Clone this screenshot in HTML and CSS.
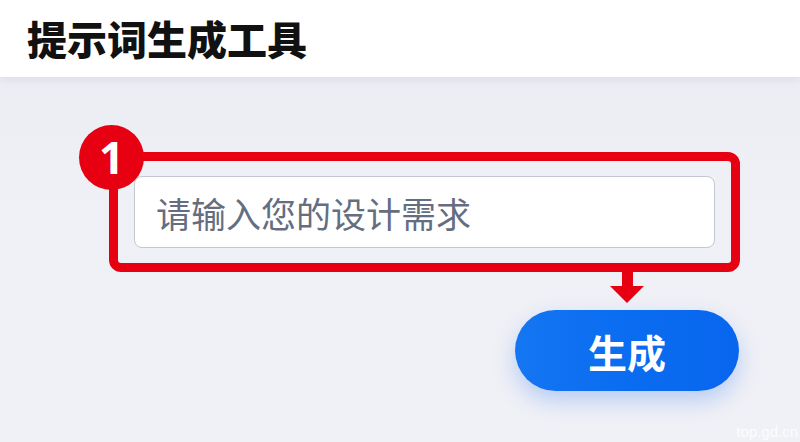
FILE: index.html
```html
<!DOCTYPE html>
<html lang="zh-CN">
<head>
    <meta charset="UTF-8">
    <meta name="viewport" content="width=device-width, initial-scale=1.0">
    <title>提示词生成工具</title>
    <link rel="stylesheet" href="styles.css">
</head>
<body>
    <header class="topbar">
        <h1>提示词生成工具</h1>
    </header>

    <main class="stage">
        <div class="frame">
            <span class="step">1</span>
            <input class="prompt-input" type="text" placeholder="请输入您的设计需求">
        </div>
        <div class="actions">
            <div class="arrow">
                <span class="arrow-stem"></span>
                <span class="arrow-head"></span>
            </div>
            <button class="generate-btn">生成</button>
        </div>
    </main>

    <div class="watermark">top.gd.cn</div>
</body>
</html>
```

FILE: styles.css
```css
body {
    margin: 0;
    height: 442px;
    overflow: hidden;
    font-family: "Noto Sans CJK SC", "Noto Sans", sans-serif;
    background: linear-gradient(180deg, #e9eaf1 0%, #eff0f5 40%, #f0f1f6 100%);
    position: relative;
}
.topbar {
    height: 77px;
    background: #fff;
    padding-left: 27px;
    box-shadow: 0 2px 8px rgba(30, 40, 80, 0.08);
    position: relative;
}
.topbar h1 {
    margin: 0;
    font-size: 40px;
    line-height: 77px;
    font-weight: 900;
    color: #111;
}
.stage {
    padding: 75px 0 0 109px;
    display: flex;
    flex-direction: column;
}
.frame {
    position: relative;
    box-sizing: border-box;
    width: 631px;
    height: 120px;
    border: 9px solid #e60012;
    border-radius: 12px;
    padding: 15px 15px 0 16px;
}
.step {
    position: absolute;
    left: -39px;
    top: -36px;
    width: 65px;
    height: 65px;
    border-radius: 50%;
    background: #e60012;
    color: #fff;
    font-family: "Noto Sans", "Liberation Sans", sans-serif;
    font-size: 44px;
    font-weight: 700;
    line-height: 64px;
    text-align: center;
}
.prompt-input {
    box-sizing: border-box;
    width: 581px;
    height: 72px;
    border: 1px solid #c3c7d1;
    border-radius: 8px;
    background: #fff;
    padding: 0 0 0 21px;
    font-family: "Noto Sans CJK SC", sans-serif;
    font-size: 35px;
    color: #333;
    outline: none;
}
.prompt-input::placeholder {
    color: #656d80;
}
.actions {
    margin-left: 406px;
    width: 224px;
    display: flex;
    flex-direction: column;
    align-items: center;
}
.arrow {
    display: flex;
    flex-direction: column;
    align-items: center;
    margin-top: -1px;
}
.arrow-stem {
    width: 11px;
    height: 15px;
    background: #e60012;
}
.arrow-head {
    width: 0;
    height: 0;
    border-left: 17px solid transparent;
    border-right: 17px solid transparent;
    border-top: 17px solid #e60012;
}
.generate-btn {
    margin-top: 7px;
    width: 224px;
    height: 81px;
    border: none;
    border-radius: 41px;
    background: linear-gradient(90deg, #1476f2 0%, #0a6cf0 50%, #0866ee 100%);
    color: #fff;
    font-family: "Noto Sans CJK SC", sans-serif;
    font-size: 39px;
    font-weight: 700;
    box-shadow: 0 10px 22px rgba(40, 110, 245, 0.28);
    cursor: pointer;
}
.watermark {
    position: absolute;
    right: 2px;
    bottom: 2px;
    font-family: "Liberation Sans", sans-serif;
    font-size: 15px;
    color: rgba(255, 255, 255, 0.85);
}
```
